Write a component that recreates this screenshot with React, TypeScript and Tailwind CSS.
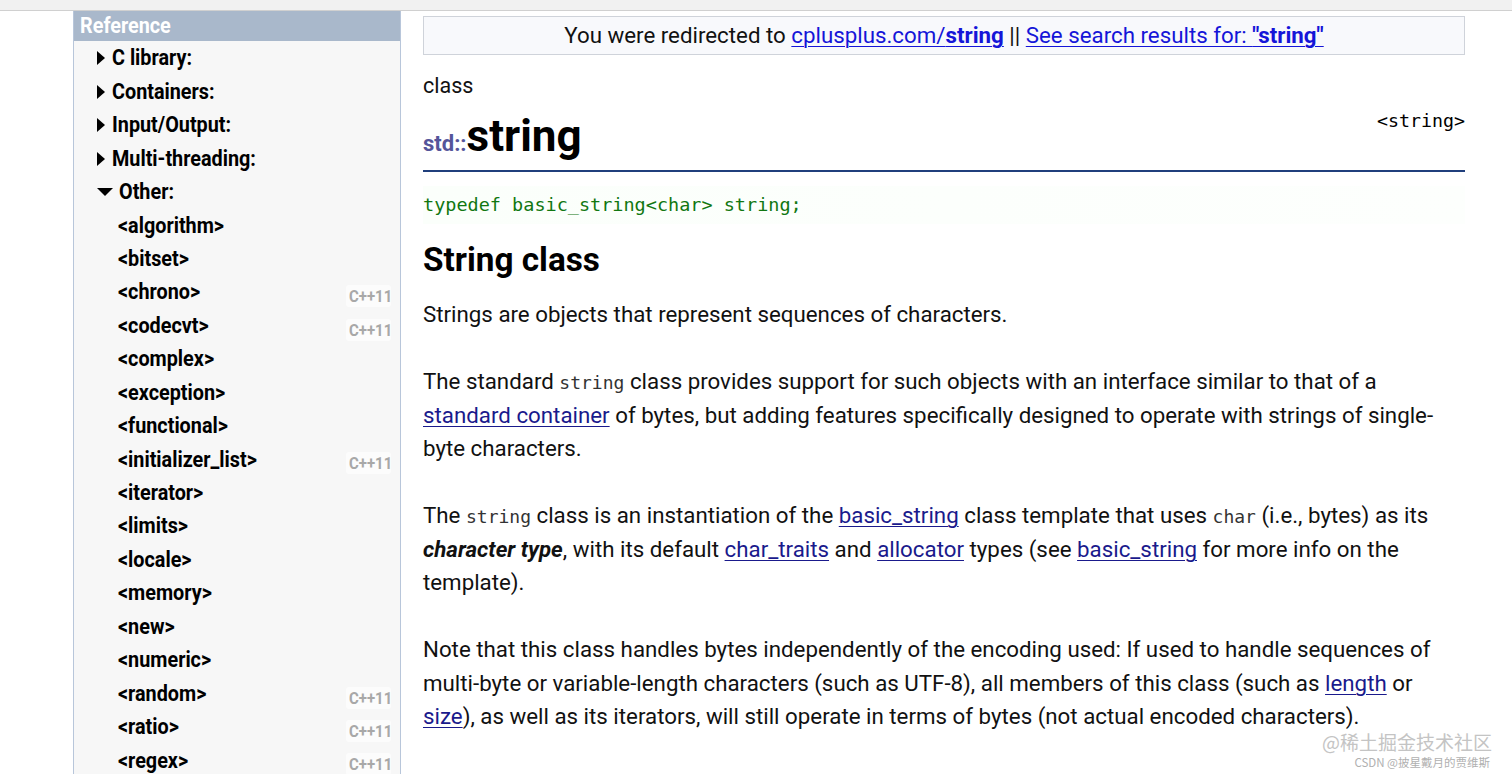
import { ReactNode } from "react";

const navTop = [
  { label: "C library:", open: false },
  { label: "Containers:", open: false },
  { label: "Input/Output:", open: false },
  { label: "Multi-threading:", open: false },
  { label: "Other:", open: true },
];

const headers = [
  { name: "<algorithm>" },
  { name: "<bitset>" },
  { name: "<chrono>", cpp11: true },
  { name: "<codecvt>", cpp11: true },
  { name: "<complex>" },
  { name: "<exception>" },
  { name: "<functional>" },
  { name: "<initializer_list>", cpp11: true },
  { name: "<iterator>" },
  { name: "<limits>" },
  { name: "<locale>" },
  { name: "<memory>" },
  { name: "<new>" },
  { name: "<numeric>" },
  { name: "<random>", cpp11: true },
  { name: "<ratio>", cpp11: true },
  { name: "<regex>", cpp11: true },
];

// no Roboto Condensed installed, so squeeze Roboto instead
const Cond = ({ children, className = "" }: { children: ReactNode; className?: string }) => (
  <span className={"inline-block origin-left scale-x-[0.88] whitespace-nowrap " + className}>{children}</span>
);

const Code = ({ children }: { children: ReactNode }) => (
  <code className="font-['DejaVu_Sans_Mono',monospace] text-[18px] leading-none text-[#333]">{children}</code>
);

const A = ({ children }: { children: ReactNode }) => (
  <a className="text-[#1a1a8c] underline underline-offset-[3px] decoration-1">{children}</a>
);

function Sidebar() {
  return (
    <aside className="w-[328px] shrink-0 border-x border-[#b8c6da] bg-[#f7f7f7] font-['Roboto',sans-serif] font-bold">
      <div className="h-[30px] bg-[#a9b8cb] pl-[6px] text-[22.5px] leading-[29px] text-white">
        <Cond>Reference</Cond>
      </div>
      {navTop.map((n) => (
        <div key={n.label} className="flex h-[33.45px] items-center pl-[23px] pt-[1px] text-[22.5px] text-black">
          {n.open ? (
            <span className="mr-[6px] inline-block h-0 w-0 border-x-[8px] border-t-[8px] border-x-transparent border-t-black" />
          ) : (
            <span className="mr-[7px] inline-block h-0 w-0 border-y-[7px] border-l-[8px] border-y-transparent border-l-black" />
          )}
          <Cond>{n.label}</Cond>
        </div>
      ))}
      {headers.map((h) => (
        <div key={h.name} className="flex h-[33.45px] items-center pl-[44px] pt-[1px] text-[22.5px] text-black">
          <Cond>{h.name}</Cond>
          {h.cpp11 && (
            <span className="ml-auto mr-[9px] mt-[8px] w-[45px] rounded-[3px] bg-[#fcfcfc] pl-[3px] text-[17px] leading-[22px] text-[#a8a8a8]">
              <Cond>C++11</Cond>
            </span>
          )}
        </div>
      ))}
    </aside>
  );
}

function Main() {
  return (
    <main className="ml-[22px] w-[1042px] font-['Roboto',sans-serif] text-[22.3px] text-[#111]">
      <div className="mt-[5px] flex h-[39px] items-center justify-center border border-[#cfd3da] bg-[#f8f9fc] text-[22.3px]">
        <span>You were redirected to&nbsp;</span>
        <a className="text-[#1515d8] underline underline-offset-[3px] decoration-1">
          cplusplus.com/<b>string</b>
        </a>
        <span>&nbsp;||&nbsp;</span>
        <a className="text-[#1515d8] underline underline-offset-[3px] decoration-1">
          See search results for: <b>"string"</b>
        </a>
      </div>
      <div className="mt-[16px] text-[21.5px] leading-[30px]">class</div>
      <div className="flex items-start justify-between border-b-2 border-[#203f7c]">
        <h1 className="mt-[9px] flex items-baseline leading-[52px]">
          <span className="text-[22px] font-bold text-[#55559a]">std::</span>
          <span className="text-[44px] font-bold text-black">string</span>
        </h1>
        <span className="mt-[6px] font-['DejaVu_Sans_Mono',monospace] text-[18.3px] text-black">&lt;string&gt;</span>
      </div>
      <div className="mt-[14px] bg-gradient-to-r from-[#fbfffb] to-[#fdfffd] py-[4px] font-['DejaVu_Sans_Mono',monospace] text-[18.5px] leading-[30px] text-[#117711]">
        typedef basic_string&lt;char&gt; string;
      </div>
      <h2 className="mt-[16px] text-[33.3px] font-bold leading-[40px] text-black">String class</h2>
      <div className="mt-[18px] leading-[33.5px]">
        <p>Strings are objects that represent sequences of characters.</p>
        <p className="mt-[33.5px]">
          The standard <Code>string</Code> class provides support for such objects with an interface similar to that of a{" "}
          <A>standard container</A> of bytes, but adding features specifically designed to operate with strings of single-byte
          characters.
        </p>
        <p className="mt-[33.5px]">
          The <Code>string</Code> class is an instantiation of the <A>basic_string</A> class template that uses <Code>char</Code>{" "}
          (i.e., bytes) as its <b className="italic">character type</b>, with its default <A>char_traits</A> and{" "}
          <A>allocator</A> types (see <A>basic_string</A> for more info on the template).
        </p>
        <p className="mt-[33.5px]">
          Note that this class handles bytes independently of the encoding used: If used to handle sequences of multi-byte or
          variable-length characters (such as UTF-8), all members of this class (such as <A>length</A> or <A>size</A>), as well
          as its iterators, will still operate in terms of bytes (not actual encoded characters).
        </p>
      </div>
    </main>
  );
}

export default function App() {
  return (
    <div className="relative h-[774px] w-[1512px] overflow-hidden bg-white">
      <div className="h-[11px] border-b border-[#d0d0d0] bg-[#f1f1f1]" />
      <div className="flex pl-[73px]">
        <Sidebar />
        <Main />
      </div>
      <div className="absolute right-[20px] bottom-[20px] text-right font-['Noto_Sans_CJK_SC',sans-serif] text-[19px] leading-[24px] text-[#c4c4c4]">
        @稀土掘金技术社区
      </div>
      <div className="absolute right-[22px] bottom-[5px] text-right font-['Noto_Sans_CJK_SC',sans-serif] text-[11.5px] leading-[14px] text-[#b0b0b0]">
        CSDN @披星戴月的贾维斯
      </div>
    </div>
  );
}
